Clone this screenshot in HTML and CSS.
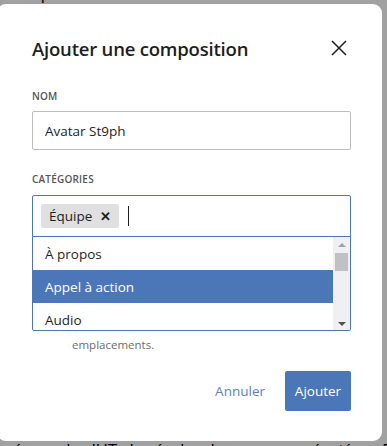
FILE: index.html
```html
<!DOCTYPE html>
<html lang="fr">
<head>
    <meta charset="UTF-8">
    <meta name="viewport" content="width=device-width, initial-scale=1.0">
    <title>Ajouter une composition</title>
    <link rel="stylesheet" href="styles.css">
</head>
<body>

    <div class="page">
        <p class="page-top">Nos partenaires Traffic</p>
        <p class="page-bottom">réseau des IUT, des écoles de commerce réputées : EM Normandie, ESC Pau</p>
    </div>

    <div class="backdrop"></div>

    <div class="modal">
        <div class="modal-header">
            <h1>Ajouter une composition</h1>
            <button class="close-btn" aria-label="Fermer">
                <svg width="16" height="16" viewBox="0 0 16 16">
                    <path d="M1 1 L15 15 M15 1 L1 15" stroke="#1e1e1e" stroke-width="1.5" fill="none"/>
                </svg>
            </button>
        </div>

        <label class="field-label">Nom</label>
        <div class="text-input">Avatar St9ph</div>

        <label class="field-label label-cat">Catégories</label>
        <div class="combo">
            <div class="combo-input">
                <span class="tag">Équipe <span class="tag-x">✕</span></span>
                <span class="caret"></span>
            </div>
            <div class="combo-list">
                <ul class="options">
                    <li>À propos</li>
                    <li class="selected">Appel à action</li>
                    <li>Audio</li>
                </ul>
                <div class="scrollbar">
                    <span class="arrow-up"></span>
                    <span class="thumb"></span>
                    <span class="track"></span>
                    <span class="arrow-down"></span>
                </div>
            </div>
        </div>
        <p class="help">emplacements.</p>

        <div class="modal-footer">
            <button class="btn btn-link">Annuler</button>
            <button class="btn btn-primary">Ajouter</button>
        </div>
    </div>

</body>
</html>
```
FILE: styles.css
```css
body {
    margin: 0;
    font-family: 'Open Sans', 'Noto Sans', sans-serif;
    background: #fff;
    color: #1e1e1e;
    overflow: hidden;
    height: 446px;
}

.page {
    font-family: 'Liberation Sans', sans-serif;
    font-size: 16px;
    color: #000;
    height: 446px;
    display: flex;
    flex-direction: column;
    justify-content: space-between;
}

.page p {
    margin: 0 0 0 8px;
    white-space: nowrap;
}

.page-top {
    margin-top: -14px !important;
}

.page-bottom {
    margin-bottom: -14px !important;
}

.backdrop {
    position: fixed;
    inset: 0;
    background: rgba(0, 0, 0, 0.37);
}

.modal {
    position: absolute;
    left: -3px;
    top: 4px;
    width: 385px;
    height: 437px;
    box-sizing: border-box;
    padding: 28px 31px 0 35px;
    background: #fff;
    border-radius: 9px;
    display: flex;
    flex-direction: column;
}

.modal-header {
    display: flex;
    justify-content: space-between;
    align-items: center;
    height: 32px;
}

h1 {
    margin: 0;
    font-size: 18.5px;
    font-weight: 600;
    color: #1e1e1e;
    letter-spacing: -0.2px;
}

.close-btn {
    background: none;
    border: none;
    padding: 0;
    margin-right: 4px;
    width: 16px;
    height: 16px;
    display: flex;
}

.field-label {
    display: block;
    margin-top: 24px;
    font-size: 10px;
    line-height: 16px;
    font-weight: 600;
    text-transform: uppercase;
    color: #555;
    letter-spacing: 0.2px;
}

.label-cat {
    margin-top: 21px;
}

.text-input {
    margin-top: 7px;
    height: 39px;
    box-sizing: border-box;
    border: 1px solid #bdbdbd;
    border-radius: 2px;
    padding: 0 12px;
    display: flex;
    align-items: center;
    font-size: 13.5px;
    color: #1e1e1e;
}

.combo {
    position: relative;
    margin-top: 8px;
    height: 42px;
}

.combo-input {
    height: 42px;
    box-sizing: border-box;
    border: 1px solid #4b77b8;
    border-radius: 2px 2px 0 0;
    padding: 0 8px;
    display: flex;
    align-items: center;
    gap: 9px;
}

.tag {
    background: #e0e0e0;
    border-radius: 2px;
    font-size: 13.5px;
    color: #1e1e1e;
    padding: 0 8px;
    height: 24px;
    display: flex;
    align-items: center;
    gap: 8px;
}

.tag-x {
    font-size: 13px;
    font-weight: 700;
}

.caret {
    width: 1px;
    height: 20px;
    background: #1e1e1e;
}

.combo-list {
    position: absolute;
    left: 0;
    right: 0;
    top: 41px;
    height: 95px;
    box-sizing: border-box;
    background: #fff;
    border: 1px solid #4b77b8;
    border-radius: 0 0 2px 2px;
    display: flex;
    overflow: hidden;
    z-index: 2;
}

.options {
    list-style: none;
    margin: 0;
    padding: 0;
    flex: 1;
}

.options li {
    height: 33px;
    padding: 0 12px;
    display: flex;
    align-items: center;
    font-size: 13.5px;
    color: #1e1e1e;
}

.options li.selected {
    background: #4b77b8;
    color: #fff;
}

.scrollbar {
    width: 17px;
    background: #f0f0f0;
    display: flex;
    flex-direction: column;
    align-items: center;
    padding: 6px 0 4px;
    box-sizing: border-box;
}

.arrow-up, .arrow-down {
    width: 0;
    height: 0;
    border-left: 4px solid transparent;
    border-right: 4px solid transparent;
}

.arrow-up {
    border-bottom: 4px solid #a3a3a3;
}

.arrow-down {
    border-top: 4px solid #505050;
}

.thumb {
    margin-top: 6px;
    width: 13px;
    height: 18px;
    background: #c1c1c1;
}

.track {
    flex: 1;
}

.help {
    margin: 100px 0 0 40px;
    font-size: 11.5px;
    line-height: 16px;
    color: #6d6d6d;
}

.modal-footer {
    margin-top: 18px;
    display: flex;
    justify-content: flex-end;
    align-items: center;
    gap: 8px;
}

.btn {
    font-family: inherit;
    font-size: 13.5px;
    height: 40px;
    border: none;
    border-radius: 2px;
    padding: 0 12px;
    cursor: pointer;
}

.btn-link {
    background: none;
    color: #5a82bf;
}

.btn-primary {
    background: #4b77b8;
    color: #fff;
    width: 66px;
    padding: 0;
}
```
